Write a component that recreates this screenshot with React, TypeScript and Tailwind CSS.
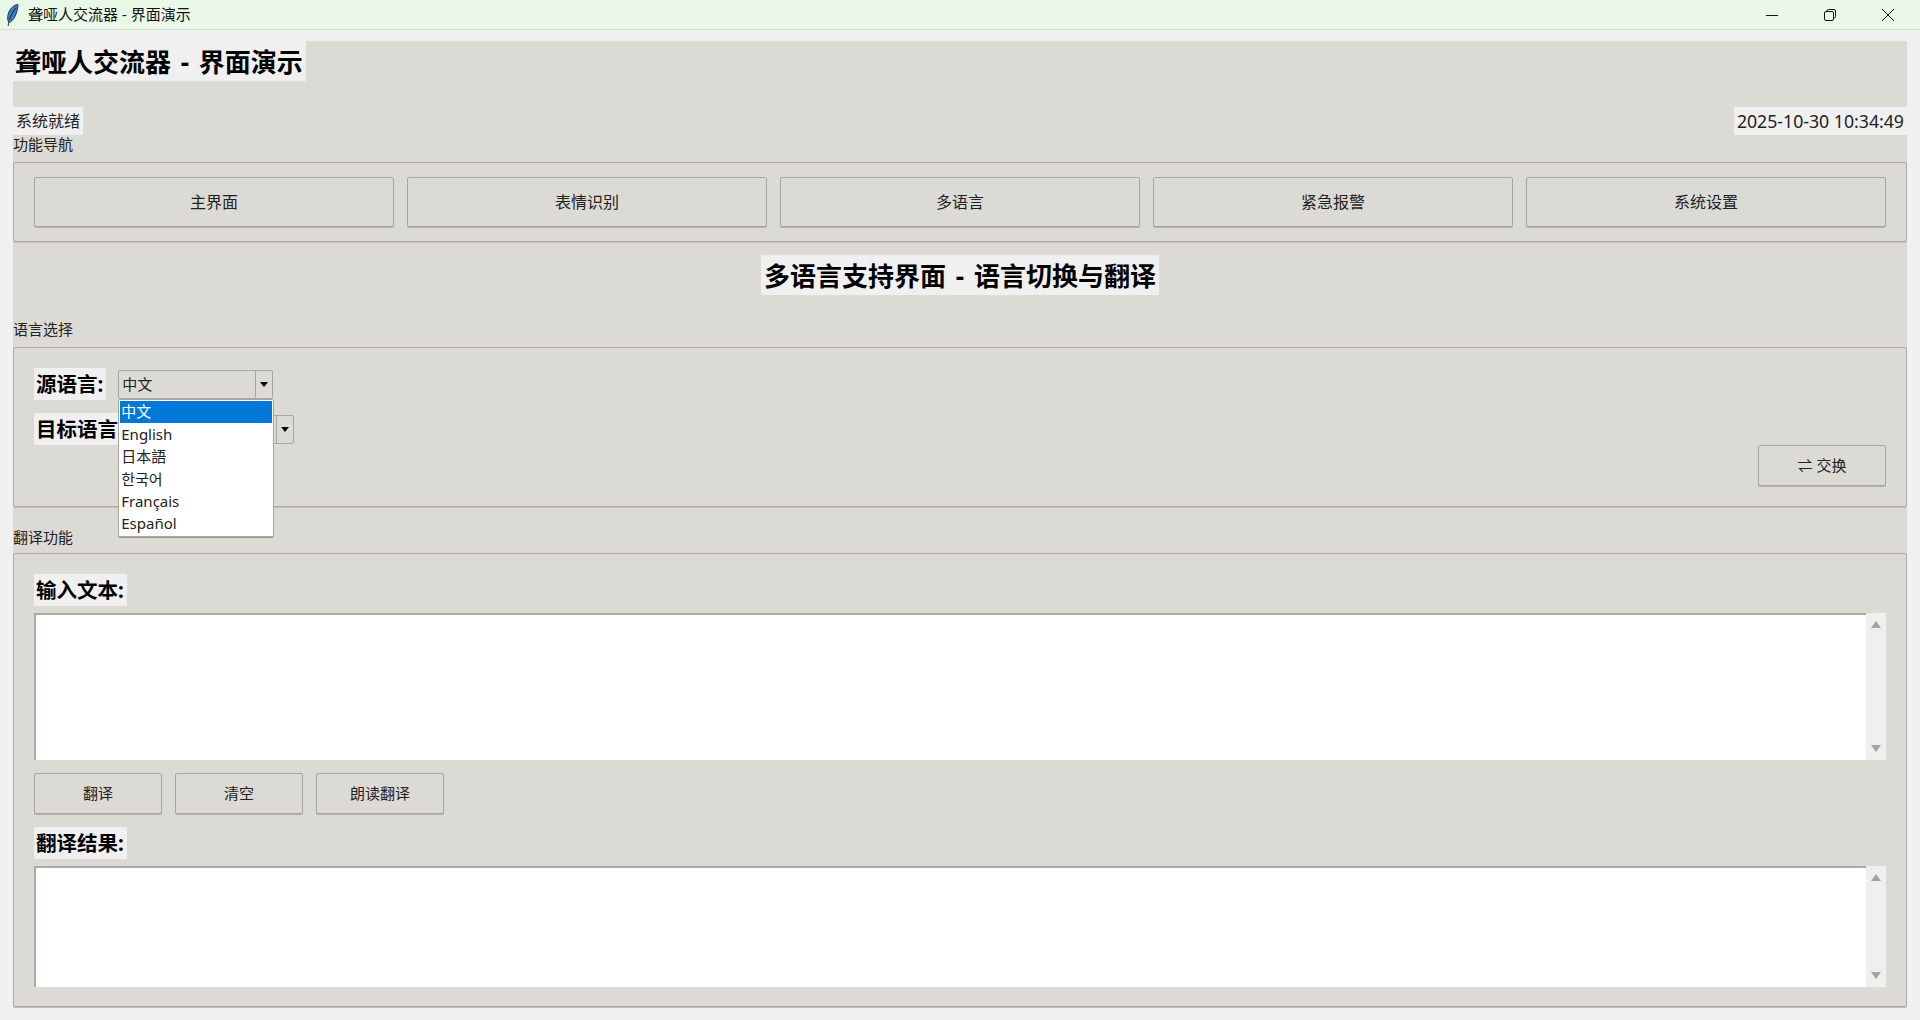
const NAV_ITEMS = ['主界面', '表情识别', '多语言', '紧急报警', '系统设置']
const LANGS = ['中文', 'English', '日本語', '한국어', 'Français', 'Español']
const SANS = "font-['Noto_Sans','Noto_Sans_CJK_SC',sans-serif]"

function Feather() {
  return (
    <svg viewBox="0 0 14 22" className="h-[22px] w-[14px]">
      <path d="M13 .5 C9 .8 4.6 4.5 3.2 10 C2.3 13.5 2.5 16.5 3.8 18.5 C8.5 17.5 12.6 9.5 13 .5 Z" fill="#3f7fc0" stroke="#14304a" strokeWidth="0.9" />
      <path d="M11.2 3.5 C8 7.5 5.6 12 4.4 16" stroke="#0b2a44" strokeWidth="1" fill="none" />
      <path d="M3.8 18 L3.2 22" stroke="#555" strokeWidth="1.2" fill="none" />
    </svg>
  )
}

function TitleBar() {
  return (
    <div className="flex h-[30px] shrink-0 items-center justify-between border-b border-[#d5dcd3] bg-[#eaf8e8] pr-[3px] pl-[5px]">
      <div className="flex items-center gap-[9px]">
        <Feather />
        <span className="text-[15px] text-[#111]">聋哑人交流器 - 界面演示</span>
      </div>
      <div className="flex items-center">
        <button className="flex h-[29px] w-[58px] items-center justify-center">
          <svg width="12" height="12" viewBox="0 0 12 12"><path d="M0 6.5H12" stroke="#111" /></svg>
        </button>
        <button className="flex h-[29px] w-[58px] items-center justify-center">
          <svg width="12" height="12" viewBox="0 0 12 12" fill="none" stroke="#111">
            <rect x="0.5" y="2.5" width="9" height="9" rx="1.5" />
            <path d="M3 2.5V2A1.5 1.5 0 0 1 4.5 .5H10A1.5 1.5 0 0 1 11.5 2V7.5A1.5 1.5 0 0 1 10 9H9.5" />
          </svg>
        </button>
        <button className="flex h-[29px] w-[58px] items-center justify-center">
          <svg width="12" height="12" viewBox="0 0 12 12"><path d="M0 0L12 12M12 0L0 12" stroke="#111" /></svg>
        </button>
      </div>
    </div>
  )
}

function Group({ label, className, children }: { label: string; className: string; children: React.ReactNode }) {
  return (
    <>
      <div className="flex h-[20px] items-center pb-[1px] text-[15px] leading-none text-[#222]">{label}</div>
      <div className={`rounded-[2px] border border-[#aeaaa3] shadow-[0_1px_0_#c4c1ba] ${className}`}>{children}</div>
    </>
  )
}

function TkButton({ label, className }: { label: string; className: string }) {
  return (
    <button className={`flex items-center justify-center rounded-[2px] border border-[#a9a69f] bg-[#dcdad5] text-[#222] shadow-[0_1px_0_#b5b2ab] ${className}`}>
      {label}
    </button>
  )
}

function Arrow() {
  return <span className="h-0 w-0 border-x-[4.5px] border-t-[5px] border-x-transparent border-t-black" />
}

function Combo({ value }: { value: string }) {
  return (
    <div className="flex h-[29px] w-[155px] items-stretch rounded-[2px] border border-[#a9a69f] bg-[#dcdad5] text-[15px] text-[#222]">
      <div className="flex flex-1 items-center border-r border-[#a9a69f] pl-[3px]">{value}</div>
      <div className="flex w-[16px] items-center justify-center">
        <Arrow />
      </div>
    </div>
  )
}

function FieldLabel({ text }: { text: string }) {
  return (
    <div className="flex h-[32px] w-fit items-center bg-[#f0f0f0] pt-[1px] pr-[3px] pl-[2px] text-[20.5px] leading-none font-bold text-black">
      {text}
    </div>
  )
}

function TextBox({ className }: { className: string }) {
  return (
    <div className={`flex ${className}`}>
      <textarea className="min-w-0 flex-1 resize-none border-t-2 border-l-2 border-[#aeaaa3] bg-white outline-none" />
      <div className="flex w-[20px] flex-col items-center justify-between bg-[#efefef] py-[8px]">
        <span className="h-0 w-0 border-x-[5px] border-b-[7px] border-x-transparent border-b-[#a3a3a3]" />
        <span className="h-0 w-0 border-x-[5px] border-t-[7px] border-x-transparent border-t-[#a3a3a3]" />
      </div>
    </div>
  )
}

export default function App() {
  return (
    <div className={`flex h-[1020px] w-[1920px] flex-col overflow-hidden bg-[#f0f0f0] ${SANS}`}>
      <TitleBar />
      <div className="mx-[13px] mt-[11px] flex h-[966px] flex-col bg-[#dcdad5]">
        {/* cabecera */}
        <div className="flex h-[40px] w-fit items-center bg-[#f0f0f0] pt-[2px] pr-[3px] pl-[2px] text-[26px] leading-none font-bold [word-spacing:3px] text-black">
          聋哑人交流器 - 界面演示
        </div>
        <div className="mt-[26px] flex h-[28px] items-center justify-between text-[#222]">
          <span className="flex h-full items-center bg-[#f0f0f0] px-[3px] text-[16px]">系统就绪</span>
          <span className="flex h-full items-center bg-[#f0f0f0] px-[3px] text-[17.7px]">2025-10-30 10:34:49</span>
        </div>

        <Group label="功能导航" className="mt-[7px] flex gap-[13px] px-[20px] py-[14px]">
          {NAV_ITEMS.map((item) => (
            <TkButton key={item} label={item} className="h-[50px] flex-1 text-[16px]" />
          ))}
        </Group>

        <div className="mt-[13px] flex h-[40px] w-fit items-center self-center bg-[#f0f0f0] px-[3px] pt-[1px] text-[26px] leading-none font-bold [word-spacing:3px] text-black">
          多语言支持界面 - 语言切换与翻译
        </div>

        <div className="mt-[25px]" />
        <Group label="语言选择" className="mt-[7px] flex h-[160px] justify-between p-[20px]">
          <div className="flex flex-col gap-[13px]">
            <div className="flex items-center gap-[12px]">
              <FieldLabel text="源语言:" />
              <div className="relative z-10">
                <Combo value="中文" />
                {/* lista abierta del combo */}
                <div className="absolute top-[29px] left-0 w-[156px] rounded-[2px] border border-[#a9a69f] bg-white p-[1px] text-[15px] text-[#222] shadow-[0_1px_0_#999]">
                  {LANGS.map((lang, i) => (
                    <div key={lang} className={`flex h-[22.4px] items-center pl-[1px] ${i === 0 ? 'bg-[#0078d7] text-white' : ''}`}>
                      {lang}
                    </div>
                  ))}
                </div>
              </div>
            </div>
            <div className="flex items-center gap-[12px]">
              <FieldLabel text="目标语言:" />
              <Combo value="English" />
            </div>
          </div>
          <TkButton label="⇌ 交换" className="h-[41px] w-[128px] self-end text-[15px]" />
        </Group>

        <div className="mt-[21px]" />
        <Group label="翻译功能" className="mt-[5px] flex h-[454px] flex-col px-[20px] pt-[20px]">
          <FieldLabel text="输入文本:" />
          <TextBox className="mt-[7px] h-[147px]" />
          <div className="mt-[13px] mb-[13px] flex gap-[13px]">
            <TkButton label="翻译" className="h-[41px] w-[128px] text-[15px]" />
            <TkButton label="清空" className="h-[41px] w-[128px] text-[15px]" />
            <TkButton label="朗读翻译" className="h-[41px] w-[128px] text-[15px]" />
          </div>
          <FieldLabel text="翻译结果:" />
          <TextBox className="mt-[7px] h-[121px]" />
        </Group>
      </div>
    </div>
  )
}
